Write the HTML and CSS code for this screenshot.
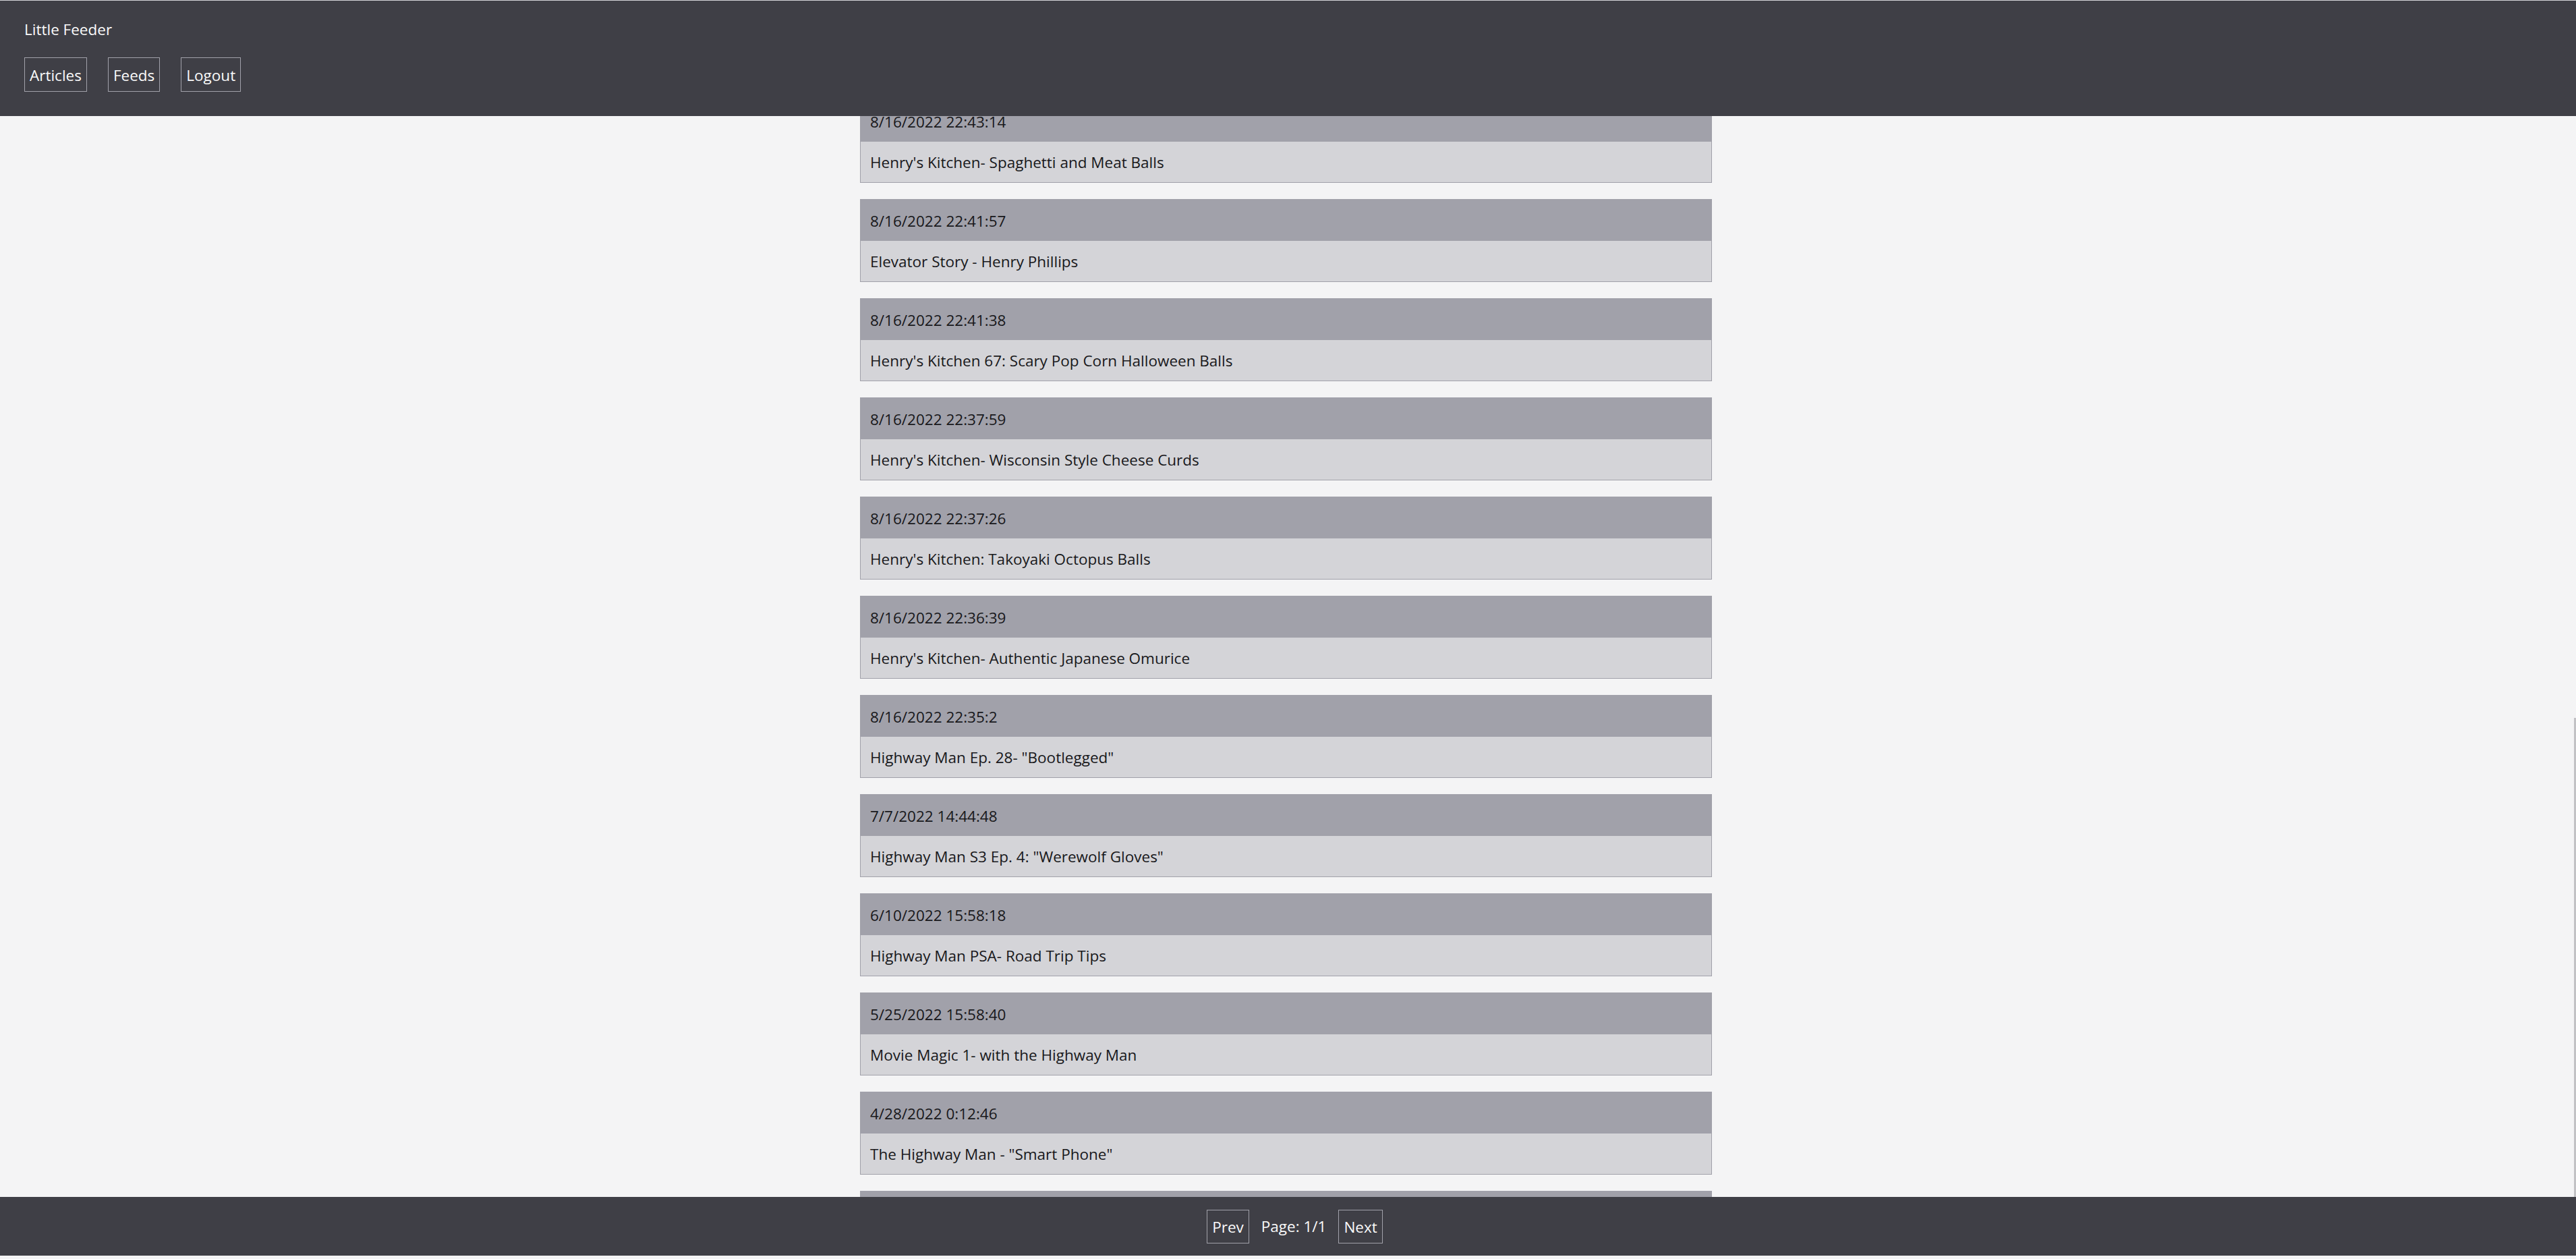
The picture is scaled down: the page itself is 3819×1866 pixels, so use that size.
FILE: index.html
```html
<!DOCTYPE html>
<html lang="en">
<head>
<meta charset="utf-8">
<title>Little Feeder</title>
<link rel="stylesheet" href="styles.css">
</head>
<body>
<div class="app">
  <header class="topbar">
    <div class="brand">Little Feeder</div>
    <nav class="nav">
      <a class="btn" href="#">Articles</a>
      <a class="btn" href="#">Feeds</a>
      <a class="btn" href="#">Logout</a>
    </nav>
  </header>
  <main class="content">
    <ul class="list">
      <li class="card"><div class="card-date">8/16/2022 22:43:14</div><div class="card-title">Henry's Kitchen- Spaghetti and Meat Balls</div></li>
      <li class="card"><div class="card-date">8/16/2022 22:41:57</div><div class="card-title">Elevator Story - Henry Phillips</div></li>
      <li class="card"><div class="card-date">8/16/2022 22:41:38</div><div class="card-title">Henry's Kitchen 67: Scary Pop Corn Halloween Balls</div></li>
      <li class="card"><div class="card-date">8/16/2022 22:37:59</div><div class="card-title">Henry's Kitchen- Wisconsin Style Cheese Curds</div></li>
      <li class="card"><div class="card-date">8/16/2022 22:37:26</div><div class="card-title">Henry's Kitchen: Takoyaki Octopus Balls</div></li>
      <li class="card"><div class="card-date">8/16/2022 22:36:39</div><div class="card-title">Henry's Kitchen- Authentic Japanese Omurice</div></li>
      <li class="card"><div class="card-date">8/16/2022 22:35:2</div><div class="card-title">Highway Man Ep. 28- "Bootlegged"</div></li>
      <li class="card"><div class="card-date">7/7/2022 14:44:48</div><div class="card-title">Highway Man S3 Ep. 4: "Werewolf Gloves"</div></li>
      <li class="card"><div class="card-date">6/10/2022 15:58:18</div><div class="card-title">Highway Man PSA- Road Trip Tips</div></li>
      <li class="card"><div class="card-date">5/25/2022 15:58:40</div><div class="card-title">Movie Magic 1- with the Highway Man</div></li>
      <li class="card"><div class="card-date">4/28/2022 0:12:46</div><div class="card-title">The Highway Man - "Smart Phone"</div></li>
      <li class="card"><div class="card-date">4/12/2022 18:20:05</div><div class="card-title">The Highway Man - "Road Rage"</div></li>
    </ul>
    <div class="scroll-thumb"></div>
  </main>
  <footer class="bottombar">
    <a class="btn" href="#">Prev</a>
    <span class="page-info">Page: 1/1</span>
    <a class="btn" href="#">Next</a>
  </footer>
</div>
</body>
</html>
```

FILE: styles.css
```css
* {
  box-sizing: border-box;
}

html, body {
  margin: 0;
  padding: 0;
  height: 100%;
}

body {
  background: #f4f4f5;
  font-family: "Open Sans", "Noto Sans", sans-serif;
  font-size: 22.5px;
  line-height: 34px;
  color: #18181b;
  overflow: hidden;
}

.app {
  height: 100vh;
  display: flex;
  flex-direction: column;
  padding-bottom: 5px;
}

.topbar {
  flex: 0 0 172px;
  background: #3f3f46;
  border-top: 1px solid #d4d4d8;
  color: #fafafa;
  padding: 26px 36px 0;
  display: flex;
  flex-direction: column;
  gap: 24px;
}

.brand {
  line-height: 34px;
}

.nav {
  display: flex;
  gap: 31px;
}

.btn {
  display: inline-block;
  border: 1px solid #a1a1aa;
  color: #fafafa;
  text-decoration: none;
  padding: 8.5px 7px 6.5px;
  line-height: 34px;
}

.content {
  flex: 1 1 auto;
  position: relative;
  overflow: hidden;
  padding-right: 6px;
}

.list {
  list-style: none;
  margin: -24px auto 0;
  padding: 0;
  width: 1263px;
}

.card {
  border: 1px solid #a1a1aa;
  margin-bottom: 24px;
}

.card-date {
  background: #a1a1aa;
  height: 61px;
  line-height: 63px;
  padding: 0 14px;
}

.card-title {
  background: #d4d4d8;
  height: 60px;
  line-height: 62px;
  padding: 0 14px;
}

.scroll-thumb {
  position: absolute;
  right: 0;
  top: 892px;
  bottom: 0;
  width: 3px;
  background: #c1c1c4;
}

.bottombar {
  flex: 0 0 87px;
  background: #3f3f46;
  color: #fafafa;
  display: flex;
  align-items: center;
  justify-content: center;
  padding-left: 20px;
}

.bottombar .btn {
  padding: 8px 7px 6px;
}

.page-info {
  margin: 0 18px;
}
```
